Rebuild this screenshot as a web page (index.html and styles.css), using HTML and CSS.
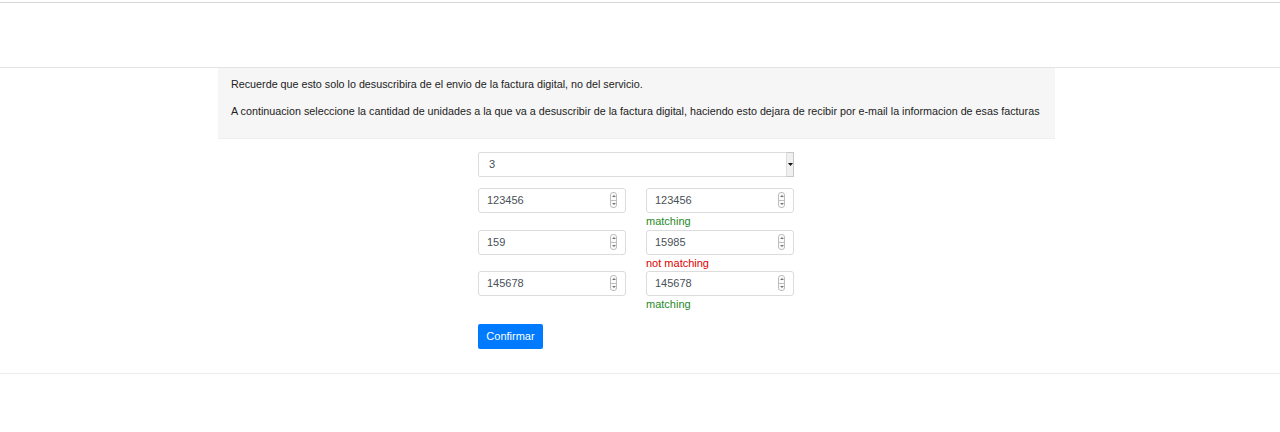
FILE: index.html
```html
<!DOCTYPE html>
<html lang="es">
<head>
<meta charset="utf-8">
<title>Desuscribir factura digital</title>
<link rel="stylesheet" href="styles.css">
</head>
<body>
<header class="topbar"></header>
<section class="notice">
  <p>Recuerde que esto solo lo desuscribira de el envio de la factura digital, no del servicio.</p>
  <p>A continuacion seleccione la cantidad de unidades a la que va a desuscribir de la factura digital, haciendo esto dejara de recibir por e-mail la informacion de esas facturas</p>
</section>
<main class="form">
  <div class="select-wrap">
    <div class="select">3</div>
    <span class="select-arrow"><svg width="5" height="3" viewBox="0 0 5 3"><path d="M0 0h5L2.5 3z" fill="#111"/></svg></span>
  </div>
  <div class="row">
    <div class="field"><div class="input">123456</div><span class="spin"></span></div>
    <div class="col">
      <div class="field"><div class="input">123456</div><span class="spin"></span></div>
      <div class="fb ok">matching</div>
    </div>
  </div>
  <div class="row">
    <div class="field"><div class="input">159</div><span class="spin"></span></div>
    <div class="col">
      <div class="field"><div class="input">15985</div><span class="spin"></span></div>
      <div class="fb bad">not matching</div>
    </div>
  </div>
  <div class="row">
    <div class="field"><div class="input">145678</div><span class="spin"></span></div>
    <div class="col">
      <div class="field"><div class="input">145678</div><span class="spin"></span></div>
      <div class="fb ok">matching</div>
    </div>
  </div>
  <button class="btn">Confirmar</button>
</main>
<footer class="bottom"></footer>
</body>
</html>
```
FILE: styles.css
```css
html, body {
  margin: 0;
  padding: 0;
  background: #fff;
  font-family: "Liberation Sans", Arial, sans-serif;
  color: #212529;
}
.topbar {
  margin-top: 2px;
  height: 64px;
  border-top: 1px solid #d6d6d6;
  border-bottom: 1px solid #e3e3e3;
}
.notice {
  margin-left: 218px;
  width: 837px;
  box-sizing: border-box;
  background: #f6f6f6;
  padding: 8px 13px 19px;
  border-bottom: 1px solid #efefef;
}
.notice p {
  margin: 0 0 11px;
  font-size: 10.75px;
  line-height: 16px;
  color: #222;
  white-space: nowrap;
}
.notice p:last-child { margin-bottom: 0; }
.form {
  margin-left: 478px;
  padding-top: 13px;
  padding-bottom: 24px;
  display: flex;
  flex-direction: column;
  align-items: flex-start;
}
.select-wrap {
  position: relative;
  width: 316px;
  margin-bottom: 11px;
}
.select {
  height: 25px;
  box-sizing: border-box;
  border: 1px solid #dcdcdc;
  border-radius: 2px;
  padding-left: 10px;
  font-size: 11px;
  line-height: 23px;
  color: #495057;
  background: #fff;
}
.select-arrow {
  position: absolute;
  right: 0;
  top: 0;
  width: 8px;
  height: 25px;
  box-sizing: border-box;
  background: #f0f0f0;
  border: 1px solid #c8c8c8;
  border-left-color: #ddd;
  display: flex;
  align-items: center;
  justify-content: center;
}
.row {
  display: flex;
  gap: 20px;
}
.col {
  display: flex;
  flex-direction: column;
}
.field {
  position: relative;
  width: 148px;
}
.input {
  height: 25px;
  box-sizing: border-box;
  border: 1px solid #dcdcdc;
  border-radius: 3px;
  padding-left: 8px;
  font-size: 11px;
  line-height: 23px;
  color: #495057;
  background: #fff;
}
.spin {
  position: absolute;
  right: 9px;
  top: 4px;
  width: 7px;
  height: 16px;
  border: 1px solid #bdbdbd;
  border-radius: 3px;
  box-sizing: border-box;
  background:
    linear-gradient(#bdbdbd, #bdbdbd) center 7px / 5px 1px no-repeat,
    #fafafa;
}
.spin::before, .spin::after {
  content: "";
  position: absolute;
  left: 1px;
  width: 0;
  height: 0;
  border-left: 2px solid transparent;
  border-right: 2px solid transparent;
}
.spin::before { top: 2px; border-bottom: 2px solid #777; }
.spin::after { bottom: 2px; border-top: 2px solid #777; }
.fb {
  font-size: 11px;
  line-height: 17px;
  height: 16.5px;
}
.ok { color: #1f8a1f; }
.bad { color: #e00000; }
.btn {
  margin-top: 11px;
  height: 25px;
  width: 65px;
  border: none;
  border-radius: 2px;
  background: #007bff;
  color: #fff;
  font-family: "Liberation Sans", Arial, sans-serif;
  font-size: 11px;
  padding: 0;
}
.bottom {
  height: 58px;
  border-top: 1px solid #ececec;
}
```
